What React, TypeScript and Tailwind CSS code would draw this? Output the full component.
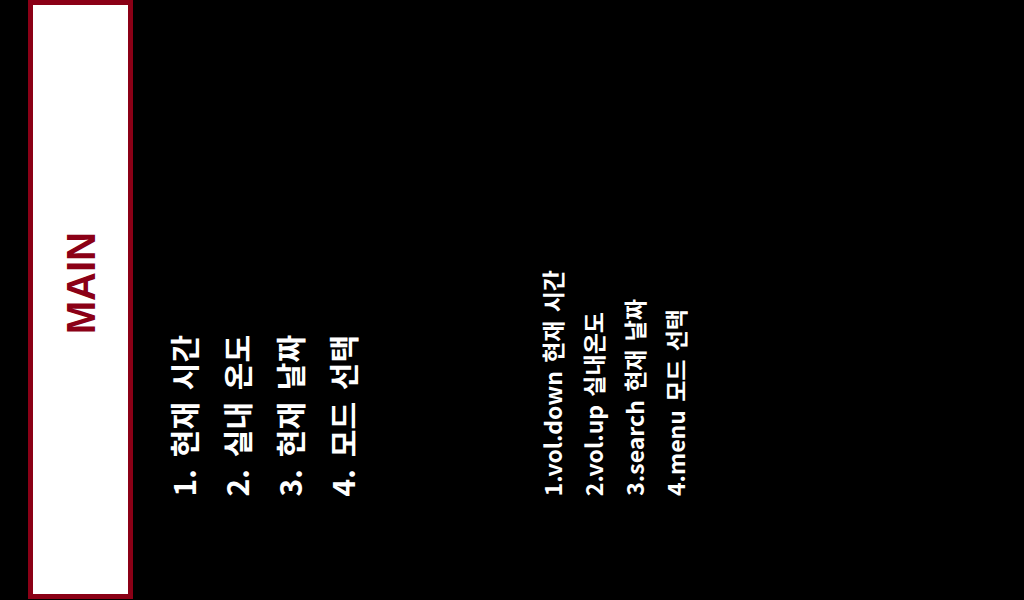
import React from "react";

const menuItems = ["1. 현재 시간", "2. 실내 온도", "3. 현재 날짜", "4. 모드 선택"];
const keyItems = [
  "1.vol.down 현재 시간",
  "2.vol.up 실내온도",
  "3.search 현재 날짜",
  "4.menu 모드 선택",
];

const vertical =
  "[writing-mode:vertical-rl] [text-orientation:sideways] rotate-180 whitespace-nowrap";

export default function App() {
  return (
    <div className="flex h-[600px] w-[1024px] bg-black overflow-hidden font-['Noto_Sans_CJK_KR',sans-serif]">
      <div className="ml-[28px] flex h-[599px] w-[105px] items-center justify-center border-[5px] border-[#8b0016] bg-white pb-[32px]">
        <span
          className={`${vertical} font-['Liberation_Sans',Arial,sans-serif] text-[40px] font-bold leading-none text-[#8b0016]`}
        >
          MAIN
        </span>
      </div>

      <div className="ml-[24px] flex h-[600px] items-end pb-[104px]">
        {menuItems.map((item) => (
          <span
            key={item}
            className={`${vertical} text-[30px] font-bold leading-[53px] text-white [word-spacing:5px]`}
          >
            {item}
          </span>
        ))}
      </div>

      <div className="ml-[163px] flex h-[600px] items-end pb-[104px]">
        {keyItems.map((item) => (
          <span
            key={item}
            className={`${vertical} text-[23px] font-bold leading-[41px] text-white [word-spacing:3px]`}
          >
            {item}
          </span>
        ))}
      </div>
    </div>
  );
}
